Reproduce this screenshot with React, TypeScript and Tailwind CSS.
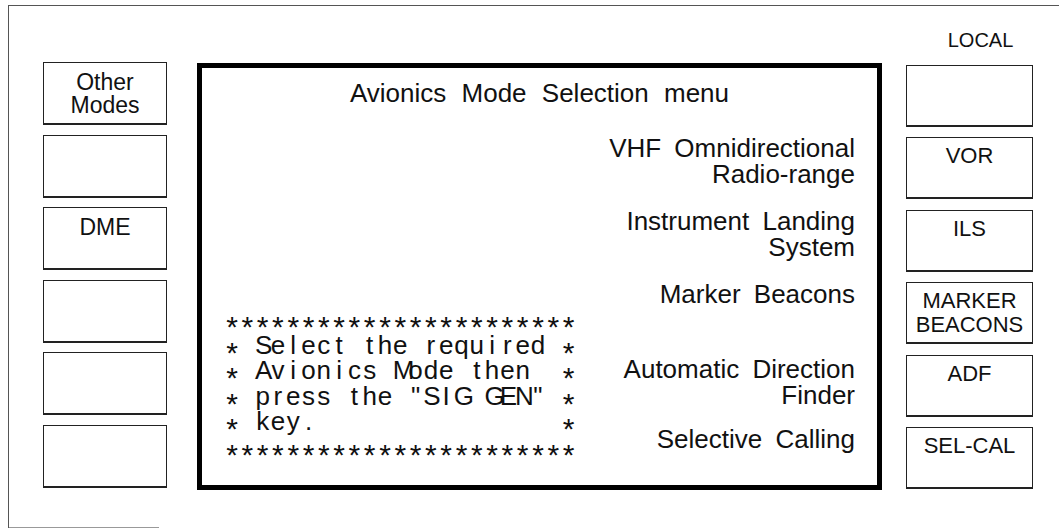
import React from "react";

const monoLines = [
  "***********************",
  "* Select the required *",
  "* Avionics Mode then  *",
  '* press the "SIG GEN" *',
  "* key." + " ".repeat(16) + "*",
  "***********************",
];

function LeftButton({ lines }: { lines: string[] }) {
  return (
    <div className="h-[63px] border border-b-2 border-[#222] pt-[8px] text-center text-[23px] leading-[23px]">
      {lines.map((l, i) => (
        <div key={i}>{l}</div>
      ))}
    </div>
  );
}

function RightButton({ lines }: { lines: string[] }) {
  return (
    <div className="h-[62px] border border-b-2 border-[#222] pt-[6px] text-center text-[22px] leading-[24px]">
      {lines.map((l, i) => (
        <div key={i}>{l}</div>
      ))}
    </div>
  );
}

function MonoLine({ text }: { text: string }) {
  return (
    <div className="flex h-[25.6px] leading-[25.6px]">
      {text.split("").map((c, i) => (
        <span
          key={i}
          className={
            c === "*"
              ? "inline-block w-[15.3px] shrink-0 text-center whitespace-pre text-[30px] translate-y-[7px]"
              : "inline-block w-[15.3px] shrink-0 text-center whitespace-pre"
          }
        >
          {c}
        </span>
      ))}
    </div>
  );
}

const options: { lines: string[]; h: string }[] = [
  { lines: ["VHF Omnidirectional", "Radio-range"], h: "h-[72.8px]" },
  { lines: ["Instrument Landing", "System"], h: "h-[72.8px]" },
  { lines: ["Marker Beacons"], h: "h-[75.8px]" },
  { lines: ["Automatic Direction", "Finder"], h: "h-[69.8px]" },
  { lines: ["Selective Calling"], h: "" },
];

export default function App() {
  return (
    <div className="w-[1059px] h-[529px] bg-white overflow-hidden pt-[5px] pl-[8px] font-['Liberation_Sans',Arial,sans-serif] text-[#111]">
      <div className="h-[523px] border-t border-l border-[#555] flex flex-col">
        <div className="flex items-start pl-[34px]">
          {/* left soft keys */}
          <div className="mt-[56px] w-[124px] shrink-0 flex flex-col gap-[9.6px]">
            <LeftButton lines={["Other", "Modes"]} />
            <LeftButton lines={[]} />
            <LeftButton lines={["DME"]} />
            <LeftButton lines={[]} />
            <LeftButton lines={[]} />
            <LeftButton lines={[]} />
          </div>

          {/* main display */}
          <div className="ml-[30px] mt-[57px] w-[685px] h-[427px] shrink-0 border-[5px] border-black flex flex-col">
            <div className="mt-[12px] text-center text-[26px] leading-[26px] [word-spacing:8px]">
              Avionics Mode Selection menu
            </div>
            <div className="flex flex-1">
              <div className="flex flex-col justify-end pl-[22.4px] pb-[24.4px] text-[26px]">
                {monoLines.map((l, i) => (
                  <MonoLine key={i} text={l} />
                ))}
              </div>
              <div className="flex-1 flex flex-col pr-[22px] pt-[29px] text-right text-[26px] leading-[26px] [word-spacing:6px]">
                {options.map((g, i) => (
                  <div key={i} className={g.h}>
                    {g.lines.map((l, j) => (
                      <div key={j}>{l}</div>
                    ))}
                  </div>
                ))}
              </div>
            </div>
          </div>

          {/* right soft keys */}
          <div className="ml-[24px] mt-[24px] w-[127px] shrink-0 flex flex-col">
            <div className="mb-[15px] pl-[22px] text-center text-[20px] leading-[20px]">LOCAL</div>
            <div className="flex flex-col gap-[10.4px]">
              <RightButton lines={[]} />
              <RightButton lines={["VOR"]} />
              <RightButton lines={["ILS"]} />
              <RightButton lines={["MARKER", "BEACONS"]} />
              <RightButton lines={["ADF"]} />
              <RightButton lines={["SEL-CAL"]} />
            </div>
          </div>
        </div>
        <div className="flex-1" />
        <div className="w-[150px] border-b border-[#999]" />
      </div>
    </div>
  );
}
